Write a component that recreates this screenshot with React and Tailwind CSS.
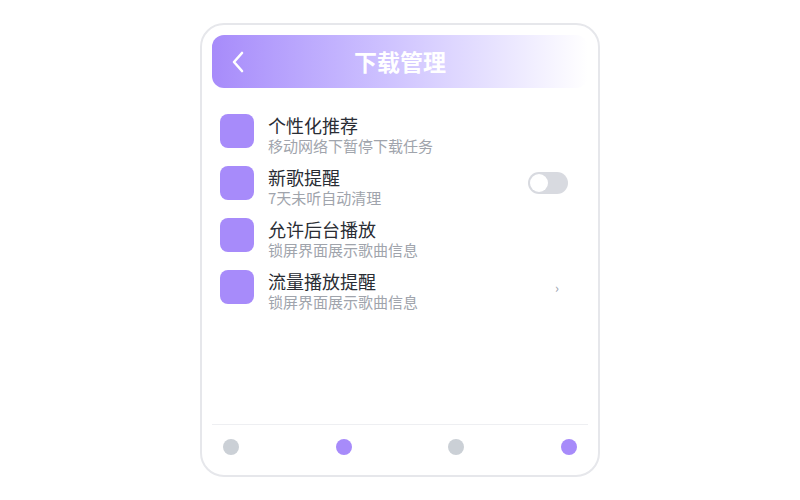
const font = { fontFamily: '"Noto Sans CJK SC", "Noto Sans", sans-serif' }

const items = [
  { title: '个性化推荐', desc: '移动网络下暂停下载任务' },
  { title: '新歌提醒', desc: '7天未听自动清理', trailing: 'toggle' },
  { title: '允许后台播放', desc: '锁屏界面展示歌曲信息' },
  { title: '流量播放提醒', desc: '锁屏界面展示歌曲信息', trailing: 'chevron' },
]

const dots = ['bg-[#cbd0d6]', 'bg-[#a78bfa]', 'bg-[#cbd0d6]', 'bg-[#a78bfa]']

function Toggle() {
  return (
    <div className="w-[40px] h-[22px] rounded-full bg-[#d8dae0] p-[2px] flex items-center">
      <div className="w-[18px] h-[18px] rounded-full bg-white" />
    </div>
  )
}

export default function App() {
  return (
    <div className="w-[800px] h-[500px] bg-white flex items-center justify-center" style={font}>
      <div className="w-[400px] h-[454px] border-2 border-[#e6e7eb] rounded-[24px] p-[10px] flex flex-col bg-white">
        {/* Header */}
        <div className="h-[53px] rounded-[12px] bg-gradient-to-r from-[#a78bfa] to-white relative flex items-center justify-center">
          <svg className="absolute left-[19px] top-[16px]" width="14" height="22" viewBox="0 0 14 22" fill="none">
            <polyline points="11,2 3,11 11,20" stroke="white" strokeWidth="2.6" strokeLinecap="round" strokeLinejoin="round" />
          </svg>
          <h1 className="text-white text-[23px] font-bold leading-none">下载管理</h1>
        </div>

        {/* List */}
        <div className="flex flex-col gap-[10px] pt-[26px] px-2">
          {items.map((item) => (
            <div key={item.title} className="flex items-start">
              <div className="w-[34px] h-[34px] rounded-lg bg-[#a78bfa] shrink-0" />
              <div className="ml-[14px] flex-1 flex flex-col">
                <span className="text-[18px] leading-[22px] text-[#2a2d34]">{item.title}</span>
                <span className="text-[15px] leading-[20px] text-[#a0a4ac]">{item.desc}</span>
              </div>
              <div className="h-[34px] flex items-center pr-[12px]">
                {item.trailing === 'toggle' && <Toggle />}
                {item.trailing === 'chevron' && (
                  <span className="mr-[9px] text-[13px] leading-none text-[#9ca3af]">›</span>
                )}
              </div>
            </div>
          ))}
        </div>

        {/* Footer dots */}
        <div className="mt-auto border-t border-[#eeeff2] pt-[14px] pb-[10px] px-[11px] flex justify-between">
          {dots.map((c, i) => (
            <div key={i} className={`w-4 h-4 rounded-full ${c}`} />
          ))}
        </div>
      </div>
    </div>
  )
}
